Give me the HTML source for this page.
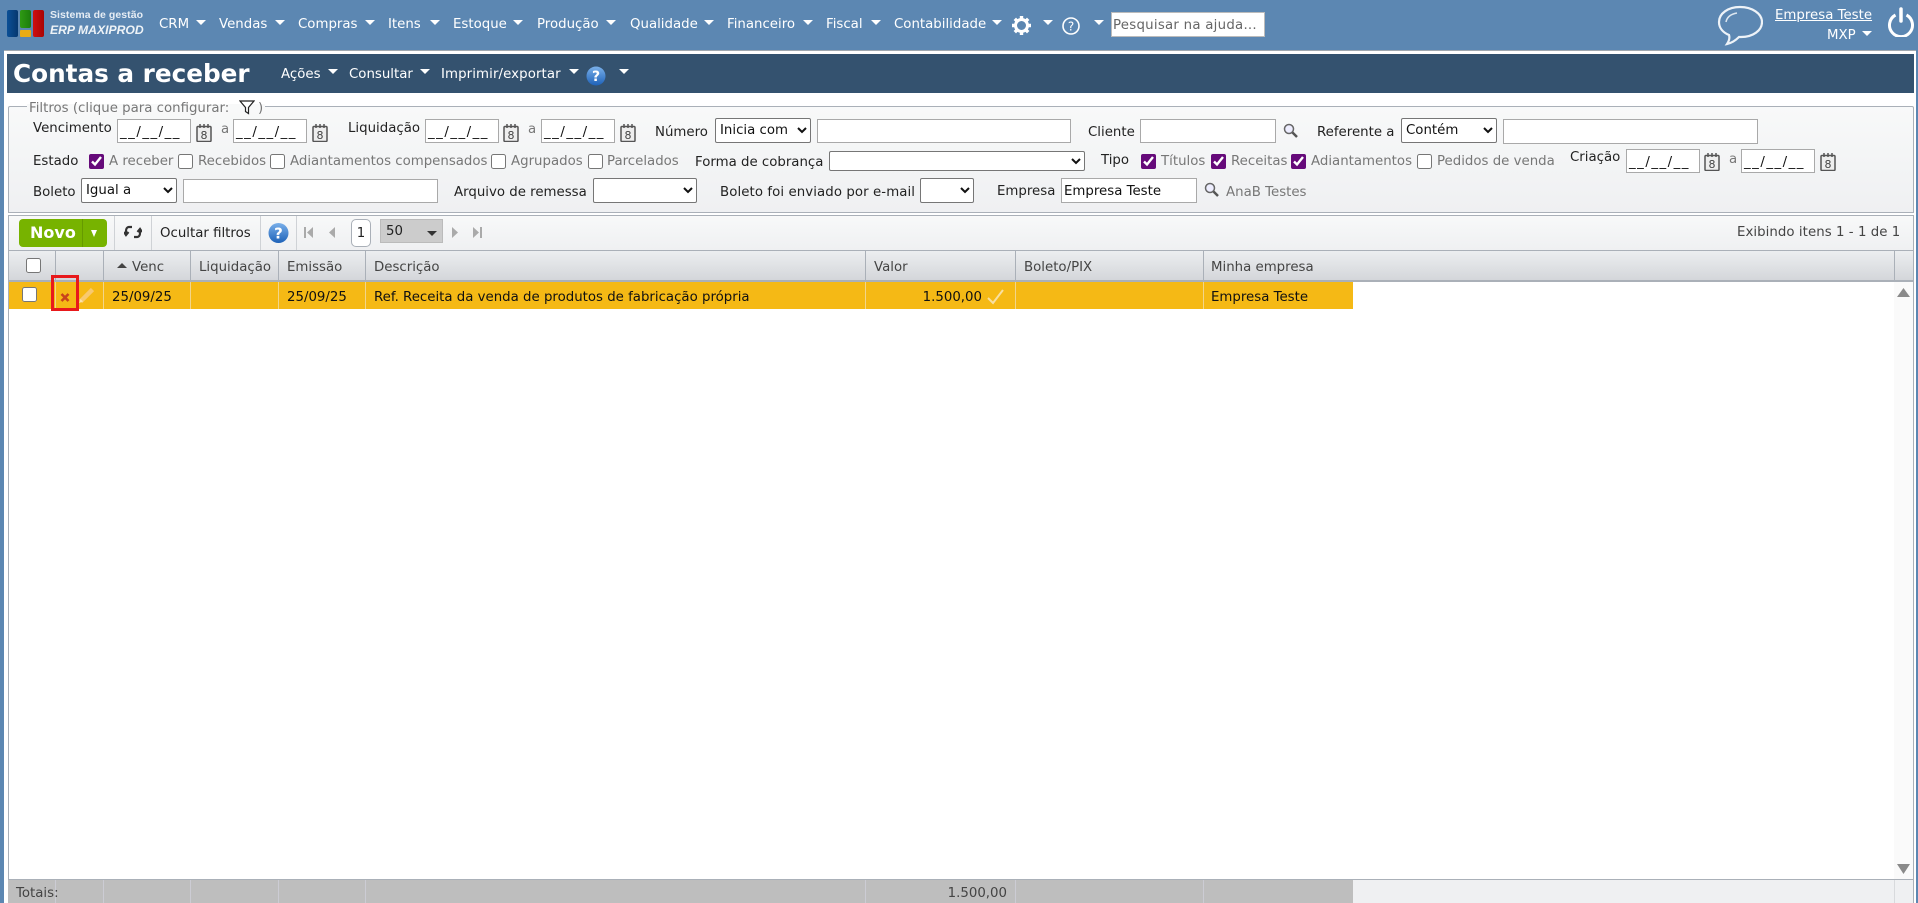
<!DOCTYPE html>
<html lang="pt"><head><meta charset="utf-8"><title>Contas a receber</title>
<style>
html,body{margin:0;padding:0;width:1918px;height:903px;overflow:hidden;background:#5c87b2;font-family:"DejaVu Sans","Liberation Sans",sans-serif;font-size:13.33px;color:#222}
.a,.t,input,select,svg{position:absolute}
.t{white-space:nowrap;line-height:16px}
.w{color:#fff}
.g{color:#777}
.c{width:0;height:0;border-left:5px solid transparent;border-right:5px solid transparent;border-top:5px solid #fff;position:absolute}
input[type=text],.i{box-sizing:border-box;border:1px solid #a9a9a9;background:#fff;margin:0;padding:0 2px;font:13.33px "DejaVu Sans",sans-serif;color:#111;position:absolute;border-radius:0;outline:0;white-space:nowrap}
.d{height:24px;line-height:25px;width:74px;letter-spacing:1.5px}
select{box-sizing:border-box;font:13.33px "DejaVu Sans",sans-serif;background:#fff;color:#111;margin:0;border:1px solid #767676;border-radius:2px}
input[type=checkbox]{margin:0;width:15px;height:15px;accent-color:#660a7a}
.v{position:absolute;width:1px;background:#aab0b8}
.s{position:absolute;width:1px;background:#f2d58c;top:282px;height:27px}
.f{position:absolute;width:1px;background:#ccccd4;top:880px;height:23px}
</style></head><body>
<!-- top bar -->
<div class="a" style="left:0;top:0;width:1918px;height:50px;background:#5c87b2"></div>
<div class="a" style="left:7px;top:10px;width:11px;height:27px;border-radius:2px;background:linear-gradient(90deg,#0b4f96,#06386f)"></div>
<div class="a" style="left:20px;top:10px;width:11px;height:18px;border-radius:2px;background:linear-gradient(90deg,#2f9a14,#1b7c0c)"></div>
<div class="a" style="left:20px;top:30px;width:11px;height:7px;background:#e9ac16;border-radius:1px"></div>
<div class="a" style="left:33px;top:10px;width:11px;height:27px;border-radius:2px;background:linear-gradient(90deg,#cf0f0f,#a80404)"></div>
<span class="t" style="left:50px;top:7px;color:#e6edf4;font:bold 10.5px/16px 'Liberation Sans',sans-serif;letter-spacing:.05px">Sistema de gestão</span>
<span class="t" style="left:50px;top:22px;color:#eef3f7;font:italic bold 12.2px/16px 'Liberation Sans',sans-serif">ERP MAXIPROD</span>

<span class="t w" style="left:159px;top:17px">CRM</span><i class="c" style="left:196px;top:20px"></i>
<span class="t w" style="left:219px;top:17px">Vendas</span><i class="c" style="left:275px;top:20px"></i>
<span class="t w" style="left:298px;top:17px">Compras</span><i class="c" style="left:365px;top:20px"></i>
<span class="t w" style="left:388px;top:17px">Itens</span><i class="c" style="left:430px;top:20px"></i>
<span class="t w" style="left:453px;top:17px">Estoque</span><i class="c" style="left:513px;top:20px"></i>
<span class="t w" style="left:537px;top:17px">Produção</span><i class="c" style="left:606px;top:20px"></i>
<span class="t w" style="left:630px;top:17px">Qualidade</span><i class="c" style="left:704px;top:20px"></i>
<span class="t w" style="left:727px;top:17px">Financeiro</span><i class="c" style="left:803px;top:20px"></i>
<span class="t w" style="left:826px;top:17px">Fiscal</span><i class="c" style="left:871px;top:20px"></i>
<span class="t w" style="left:894px;top:17px">Contabilidade</span><i class="c" style="left:992px;top:20px"></i>
<svg style="left:1011px;top:15px" width="21" height="21" viewBox="0 0 21 21"><circle cx="10.5" cy="10.5" r="6" fill="none" stroke="#fff" stroke-width="3"/><g stroke="#fff" stroke-width="3.4"><path d="M10.5 1v4M10.5 16v4M1 10.5h4M16 10.5h4M3.8 3.8l2.8 2.8M14.4 14.4l2.8 2.8M3.8 17.2l2.8-2.8M14.4 6.6l2.8-2.8"/></g></svg>
<i class="c" style="left:1043px;top:20px"></i>
<svg style="left:1062px;top:17px" width="18" height="18" viewBox="0 0 18 18"><circle cx="9" cy="9" r="8" fill="none" stroke="#fff" stroke-width="1.6"/><text x="9" y="13.5" text-anchor="middle" fill="#fff" font-size="12" font-family="DejaVu Sans">?</text></svg>
<i class="c" style="left:1094px;top:20px"></i>
<div class="i" style="left:1111px;top:12px;width:154px;height:25px;line-height:25px;color:#666;border-color:#bbb;padding-left:1px;letter-spacing:.25px">Pesquisar na ajuda...</div>
<svg style="left:1717px;top:5px" width="46" height="41" viewBox="0 0 46 41"><path d="M23 2C11 2 2 8.500 2 17c0 6 4 10.500 10 13 1 3 0 6-2 9 5-1 9-4 12-7h2c12 0 21-6.500 21-15S35 2 23 2z" fill="none" stroke="#eef3f8" stroke-width="2.200"/><path d="M9 17c1-5 5-8 11-9" fill="none" stroke="#dde7f0" stroke-width="1.500"/></svg>
<span class="t w" style="left:1775px;top:8px;text-decoration:underline">Empresa Teste</span>
<span class="t w" style="left:1827px;top:28px">MXP</span><i class="c" style="left:1862px;top:31px"></i>
<svg style="left:1887px;top:7px" width="28" height="30" viewBox="0 0 28 30"><path d="M8.500 8A11.500 11.500 0 1 0 19.500 8" fill="none" stroke="#fff" stroke-width="3"/><path d="M14 2v12" stroke="#fff" stroke-width="3.500" stroke-linecap="round"/></svg>

<!-- panel -->
<div class="a" style="left:4px;top:50px;width:1912px;height:853px;background:#fff;border-top:1px solid #a0a8b0;box-sizing:border-box"></div>
<div class="a" style="left:7px;top:54px;width:1907px;height:39px;background:#34526f"></div>
<span class="t w" style="left:13px;top:58px;font:bold 24.7px/32px 'DejaVu Sans',sans-serif">Contas a receber</span>
<span class="t w" style="left:281px;top:67px">Ações</span><i class="c" style="left:328px;top:69px"></i>
<span class="t w" style="left:349px;top:67px">Consultar</span><i class="c" style="left:420px;top:69px"></i>
<span class="t w" style="left:441px;top:67px;letter-spacing:.1px">Imprimir/exportar</span><i class="c" style="left:569px;top:69px"></i>
<svg style="left:586px;top:66px" width="20" height="20" viewBox="0 0 20 20"><defs><linearGradient id="q1" x1="0" y1="0" x2="0" y2="1"><stop offset="0" stop-color="#7ab0ea"/><stop offset="1" stop-color="#1e62b8"/></linearGradient></defs><circle cx="10" cy="10" r="9.500" fill="url(#q1)"/><text x="10" y="15" text-anchor="middle" fill="#fff" font-weight="bold" font-size="14" font-family="DejaVu Sans">?</text></svg>
<i class="c" style="left:619px;top:69px"></i>

<!-- filters -->
<div class="a" style="left:8px;top:106px;width:1906px;height:107px;box-sizing:border-box;border:1px solid #aab0b8;border-radius:2px 2px 0 0;background:linear-gradient(#f8f9f9,#eff0f2)"></div>
<div class="a" style="left:27px;top:104px;width:238px;height:6px;background:#f8f9f9"></div>
<span class="t g" style="left:29px;top:101px">Filtros (clique para configurar:</span>
<svg style="left:239px;top:100px" width="16" height="15" viewBox="0 0 16 15"><path d="M1 1h14L9.500 7.500V13.500L6.500 11.500V7.500z" fill="#fff" stroke="#222" stroke-width="1.200"/></svg>
<span class="t g" style="left:258px;top:101px">)</span>

<span class="t" style="left:33px;top:121px">Vencimento</span>
<div class="i d" style="left:117px;top:119px">__/__/__</div>
<svg style="left:196px;top:124px" width="16" height="18" viewBox="0 0 16 18"><rect x="1" y="2.500" width="14" height="15" rx="1" fill="#eee" stroke="#555" stroke-width="1.500"/><path d="M4 0v4M8 0v4M12 0v4" stroke="#555" stroke-width="1.500"/><text x="8" y="15" text-anchor="middle" font-size="11" fill="#444" font-family="DejaVu Sans">8</text></svg>
<span class="t g" style="left:221px;top:122px">a</span>
<div class="i d" style="left:233px;top:119px">__/__/__</div>
<svg style="left:312px;top:124px" width="16" height="18" viewBox="0 0 16 18"><rect x="1" y="2.500" width="14" height="15" rx="1" fill="#eee" stroke="#555" stroke-width="1.500"/><path d="M4 0v4M8 0v4M12 0v4" stroke="#555" stroke-width="1.500"/><text x="8" y="15" text-anchor="middle" font-size="11" fill="#444" font-family="DejaVu Sans">8</text></svg>
<span class="t" style="left:348px;top:121px">Liquidação</span>
<div class="i d" style="left:425px;top:119px">__/__/__</div>
<svg style="left:503px;top:124px" width="16" height="18" viewBox="0 0 16 18"><rect x="1" y="2.500" width="14" height="15" rx="1" fill="#eee" stroke="#555" stroke-width="1.500"/><path d="M4 0v4M8 0v4M12 0v4" stroke="#555" stroke-width="1.500"/><text x="8" y="15" text-anchor="middle" font-size="11" fill="#444" font-family="DejaVu Sans">8</text></svg>
<span class="t g" style="left:528px;top:122px">a</span>
<div class="i d" style="left:541px;top:119px">__/__/__</div>
<svg style="left:620px;top:124px" width="16" height="18" viewBox="0 0 16 18"><rect x="1" y="2.500" width="14" height="15" rx="1" fill="#eee" stroke="#555" stroke-width="1.500"/><path d="M4 0v4M8 0v4M12 0v4" stroke="#555" stroke-width="1.500"/><text x="8" y="15" text-anchor="middle" font-size="11" fill="#444" font-family="DejaVu Sans">8</text></svg>
<span class="t" style="left:655px;top:125px">Número</span>
<select style="left:715px;top:118px;width:96px;height:25px"><option>Inicia com</option></select>
<input type="text" style="left:817px;top:119px;width:254px;height:24px">
<span class="t" style="left:1088px;top:125px">Cliente</span>
<input type="text" style="left:1140px;top:119px;width:136px;height:24px">
<svg style="left:1283px;top:123px" width="15" height="15" viewBox="0 0 15 15"><circle cx="6" cy="6" r="4.500" fill="#eef" stroke="#666" stroke-width="1.500"/><path d="M9.500 9.500l4.500 4.500" stroke="#555" stroke-width="2.500"/></svg>
<span class="t" style="left:1317px;top:125px">Referente a</span>
<select style="left:1401px;top:118px;width:96px;height:25px"><option>Contém</option></select>
<input type="text" style="left:1503px;top:119px;width:255px;height:25px">

<span class="t" style="left:33px;top:154px">Estado</span>
<input type="checkbox" checked style="left:89px;top:154px"><span class="t g" style="left:109px;top:154px">A receber</span>
<input type="checkbox" style="left:178px;top:154px"><span class="t g" style="left:198px;top:154px">Recebidos</span>
<input type="checkbox" style="left:270px;top:154px"><span class="t g" style="left:290px;top:154px">Adiantamentos compensados</span>
<input type="checkbox" style="left:491px;top:154px"><span class="t g" style="left:511px;top:154px">Agrupados</span>
<input type="checkbox" style="left:588px;top:154px"><span class="t g" style="left:607px;top:154px">Parcelados</span>
<span class="t" style="left:695px;top:155px">Forma de cobrança</span>
<select style="left:829px;top:151px;width:256px;height:20px"><option></option></select>
<span class="t" style="left:1101px;top:153px">Tipo</span>
<input type="checkbox" checked style="left:1141px;top:154px"><span class="t g" style="left:1161px;top:154px">Títulos</span>
<input type="checkbox" checked style="left:1211px;top:154px"><span class="t g" style="left:1231px;top:154px">Receitas</span>
<input type="checkbox" checked style="left:1291px;top:154px"><span class="t g" style="left:1311px;top:154px">Adiantamentos</span>
<input type="checkbox" style="left:1417px;top:154px"><span class="t g" style="left:1437px;top:154px">Pedidos de venda</span>
<span class="t" style="left:1570px;top:150px">Criação</span>
<div class="i d" style="left:1626px;top:149px">__/__/__</div>
<svg style="left:1704px;top:153px" width="16" height="18" viewBox="0 0 16 18"><rect x="1" y="2.500" width="14" height="15" rx="1" fill="#eee" stroke="#555" stroke-width="1.500"/><path d="M4 0v4M8 0v4M12 0v4" stroke="#555" stroke-width="1.500"/><text x="8" y="15" text-anchor="middle" font-size="11" fill="#444" font-family="DejaVu Sans">8</text></svg>
<span class="t g" style="left:1729px;top:152px">a</span>
<div class="i d" style="left:1741px;top:149px">__/__/__</div>
<svg style="left:1820px;top:153px" width="16" height="18" viewBox="0 0 16 18"><rect x="1" y="2.500" width="14" height="15" rx="1" fill="#eee" stroke="#555" stroke-width="1.500"/><path d="M4 0v4M8 0v4M12 0v4" stroke="#555" stroke-width="1.500"/><text x="8" y="15" text-anchor="middle" font-size="11" fill="#444" font-family="DejaVu Sans">8</text></svg>

<span class="t" style="left:33px;top:185px">Boleto</span>
<select style="left:81px;top:178px;width:96px;height:25px"><option>Igual a</option></select>
<input type="text" style="left:183px;top:179px;width:255px;height:24px">
<span class="t" style="left:454px;top:185px">Arquivo de remessa</span>
<select style="left:593px;top:178px;width:104px;height:25px"><option></option></select>
<span class="t" style="left:720px;top:185px;letter-spacing:.08px">Boleto foi enviado por e-mail</span>
<select style="left:920px;top:178px;width:54px;height:25px"><option></option></select>
<span class="t" style="left:997px;top:184px">Empresa</span>
<input type="text" value="Empresa Teste" style="left:1061px;top:178px;width:136px;height:25px;padding-top:1px">
<svg style="left:1204px;top:182px" width="15" height="15" viewBox="0 0 15 15"><circle cx="6" cy="6" r="4.500" fill="#eef" stroke="#666" stroke-width="1.500"/><path d="M9.500 9.500l4.500 4.500" stroke="#555" stroke-width="2.500"/></svg>
<span class="t g" style="left:1226px;top:185px">AnaB Testes</span>

<!-- toolbar -->
<div class="a" style="left:8px;top:215px;width:1906px;height:35px;box-sizing:border-box;border:1px solid #aab0b8;border-bottom:0;background:linear-gradient(#f8f9f9,#eff0f2)"></div>
<div class="a" style="left:19px;top:219px;width:88px;height:28px;background:#77b300;border-radius:4px"></div>
<div class="a" style="left:82px;top:219px;width:1px;height:28px;background:#669a00"></div>
<span class="t w" style="left:30px;top:225px;font:bold 16px/16px 'DejaVu Sans',sans-serif">Novo</span>
<i class="c" style="left:91px;top:230px;border-left-width:3.500px;border-right-width:3.500px;border-top-width:7px"></i>
<div class="v" style="left:114px;top:216px;height:34px;background:#cfd2d6"></div>
<svg style="left:124px;top:223px" width="18" height="18" viewBox="0 0 18 18"><path d="M8 4H5C3 4 2 6 2 8v3M0 9l2 3 2.500-3M10 14h3c2 0 3-2 3-4V7M18 9l-2-3-2.500 3" fill="none" stroke="#333" stroke-width="2.200"/></svg>
<div class="v" style="left:151px;top:216px;height:34px;background:#cfd2d6"></div>
<span class="t" style="left:160px;top:226px">Ocultar filtros</span>
<div class="v" style="left:260px;top:216px;height:34px;background:#cfd2d6"></div>
<svg style="left:268px;top:222px" width="21" height="22" viewBox="0 0 21 22"><defs><linearGradient id="q2" x1="0" y1="0" x2="0" y2="1"><stop offset="0" stop-color="#7ab0ea"/><stop offset="1" stop-color="#1e62b8"/></linearGradient></defs><circle cx="10.500" cy="11" r="10" fill="url(#q2)"/><text x="10.500" y="16.500" text-anchor="middle" fill="#fff" font-weight="bold" font-size="15" font-family="DejaVu Sans">?</text></svg>
<div class="v" style="left:296px;top:216px;height:34px;background:#cfd2d6"></div>
<svg style="left:304px;top:226px" width="10" height="13" viewBox="0 0 10 13"><path d="M0 1h2v11H0zM9 1v11L3 6.500z" fill="#aaa"/></svg>
<svg style="left:328px;top:226px" width="8" height="13" viewBox="0 0 8 13"><path d="M7 1v11L1 6.500z" fill="#aaa"/></svg>
<div class="a" style="left:351px;top:219px;width:20px;height:28px;box-sizing:border-box;border:1px solid #aab0b8;border-radius:5px;background:#fff;text-align:center;line-height:27px">1</div>
<div class="a" style="left:380px;top:219px;width:63px;height:24px;box-sizing:border-box;border:1px solid #bbb;background:#ccc;line-height:23px;padding-left:5px">50</div>
<i class="c" style="left:427px;top:231px;border-top-color:#333"></i>
<svg style="left:451px;top:226px" width="8" height="13" viewBox="0 0 8 13"><path d="M1 1v11l6-5.500z" fill="#aaa"/></svg>
<svg style="left:472px;top:226px" width="10" height="13" viewBox="0 0 10 13"><path d="M1 1v11l6-5.500zM8 1h2v11H8z" fill="#aaa"/></svg>
<span class="t" style="left:1737px;top:225px;color:#444;letter-spacing:.05px">Exibindo itens 1 - 1 de 1</span>

<!-- grid -->
<div class="a" style="left:8px;top:250px;width:1906px;height:32px;box-sizing:border-box;border:1px solid #aab0b8;border-width:1px 1px 2px;background:linear-gradient(#eceef0,#d4d6da)"></div>
<div class="a" style="left:8px;top:282px;width:1px;height:598px;background:#aab0b8"></div>
<div class="a" style="left:1913px;top:282px;width:1px;height:598px;background:#aab0b8"></div>
<div class="v" style="left:55px;top:251px;height:30px"></div>
<div class="v" style="left:103px;top:251px;height:30px"></div>
<div class="v" style="left:190px;top:251px;height:30px"></div>
<div class="v" style="left:278px;top:251px;height:30px"></div>
<div class="v" style="left:365px;top:251px;height:30px"></div>
<div class="v" style="left:865px;top:251px;height:30px"></div>
<div class="v" style="left:1015px;top:251px;height:30px"></div>
<div class="v" style="left:1203px;top:251px;height:30px"></div>
<div class="v" style="left:1894px;top:251px;height:30px"></div>
<input type="checkbox" style="left:26px;top:258px">
<i class="c" style="left:117px;top:263px;border-top:0;border-bottom:5px solid #444"></i>
<span class="t" style="left:132px;top:260px;color:#444">Venc</span>
<span class="t" style="left:199px;top:260px;color:#444">Liquidação</span>
<span class="t" style="left:287px;top:260px;color:#444">Emissão</span>
<span class="t" style="left:374px;top:260px;color:#444">Descrição</span>
<span class="t" style="left:874px;top:260px;color:#444">Valor</span>
<span class="t" style="left:1024px;top:260px;color:#444">Boleto/PIX</span>
<span class="t" style="left:1211px;top:260px;color:#444">Minha empresa</span>

<div class="a" style="left:9px;top:282px;width:1344px;height:27px;background:#f5b915"></div>
<div class="s" style="left:55px"></div><div class="s" style="left:103px"></div><div class="s" style="left:190px"></div><div class="s" style="left:278px"></div><div class="s" style="left:365px"></div><div class="s" style="left:865px"></div><div class="s" style="left:1015px"></div><div class="s" style="left:1203px"></div>
<input type="checkbox" style="left:22px;top:287px">
<svg style="left:60px;top:293px" width="10" height="9" viewBox="0 0 10 9"><path d="M1.500 1l7 7M8.500 1l-7 7" stroke="#c8441c" stroke-width="2.600"/></svg>
<svg style="left:79px;top:287px" width="16" height="16" viewBox="0 0 16 16"><path d="M1.500 14.500L13.500 2.500" stroke="#f8c96f" stroke-width="4.500"/><path d="M0 16l1.500-4 2.500 2.500z" fill="#fbe3b0"/></svg>
<div class="a" style="left:51px;top:275px;width:28px;height:36px;box-sizing:border-box;border:3px solid #e8191c"></div>
<span class="t" style="left:112px;top:290px;color:#111">25/09/25</span>
<span class="t" style="left:287px;top:290px;color:#111">25/09/25</span>
<span class="t" style="left:374px;top:290px;color:#111">Ref. Receita da venda de produtos de fabricação própria</span>
<span class="t" style="right:936px;top:290px;color:#111">1.500,00</span>
<svg style="left:987px;top:289px" width="17" height="16" viewBox="0 0 17 16"><path d="M1 9l5 5L16 1" fill="none" stroke="#f8e0a2" stroke-width="2"/></svg>
<span class="t" style="left:1211px;top:290px;color:#111">Empresa Teste</span>

<div class="a" style="left:1894px;top:282px;width:19px;height:597px;background:#fafafa"></div>
<svg style="left:1897px;top:288px" width="13" height="9" viewBox="0 0 13 9"><path d="M6.500 0L13 9H0z" fill="#8a8a8a"/></svg>
<svg style="left:1897px;top:864px" width="13" height="10" viewBox="0 0 13 10"><path d="M0 0h13L6.500 10z" fill="#8a8a8a"/></svg>

<!-- totals -->
<div class="a" style="left:8px;top:879px;width:1906px;height:24px;background:#eff0f2;border-top:1px solid #aab0b8;box-sizing:border-box"></div>
<div class="a" style="left:8px;top:880px;width:1345px;height:23px;background:#bebebe"></div>
<div class="f" style="left:55px"></div><div class="f" style="left:103px"></div><div class="f" style="left:190px"></div><div class="f" style="left:278px"></div><div class="f" style="left:365px"></div><div class="f" style="left:865px"></div><div class="f" style="left:1015px"></div><div class="f" style="left:1203px"></div>
<div class="f" style="left:1894px;background:#d8dadd"></div>
<div class="a" style="left:1913px;top:880px;width:1px;height:23px;background:#aab0b8"></div>
<span class="t" style="left:16px;top:886px;color:#444">Totais:</span>
<span class="t" style="right:911px;top:886px;color:#444">1.500,00</span>
</body></html>
